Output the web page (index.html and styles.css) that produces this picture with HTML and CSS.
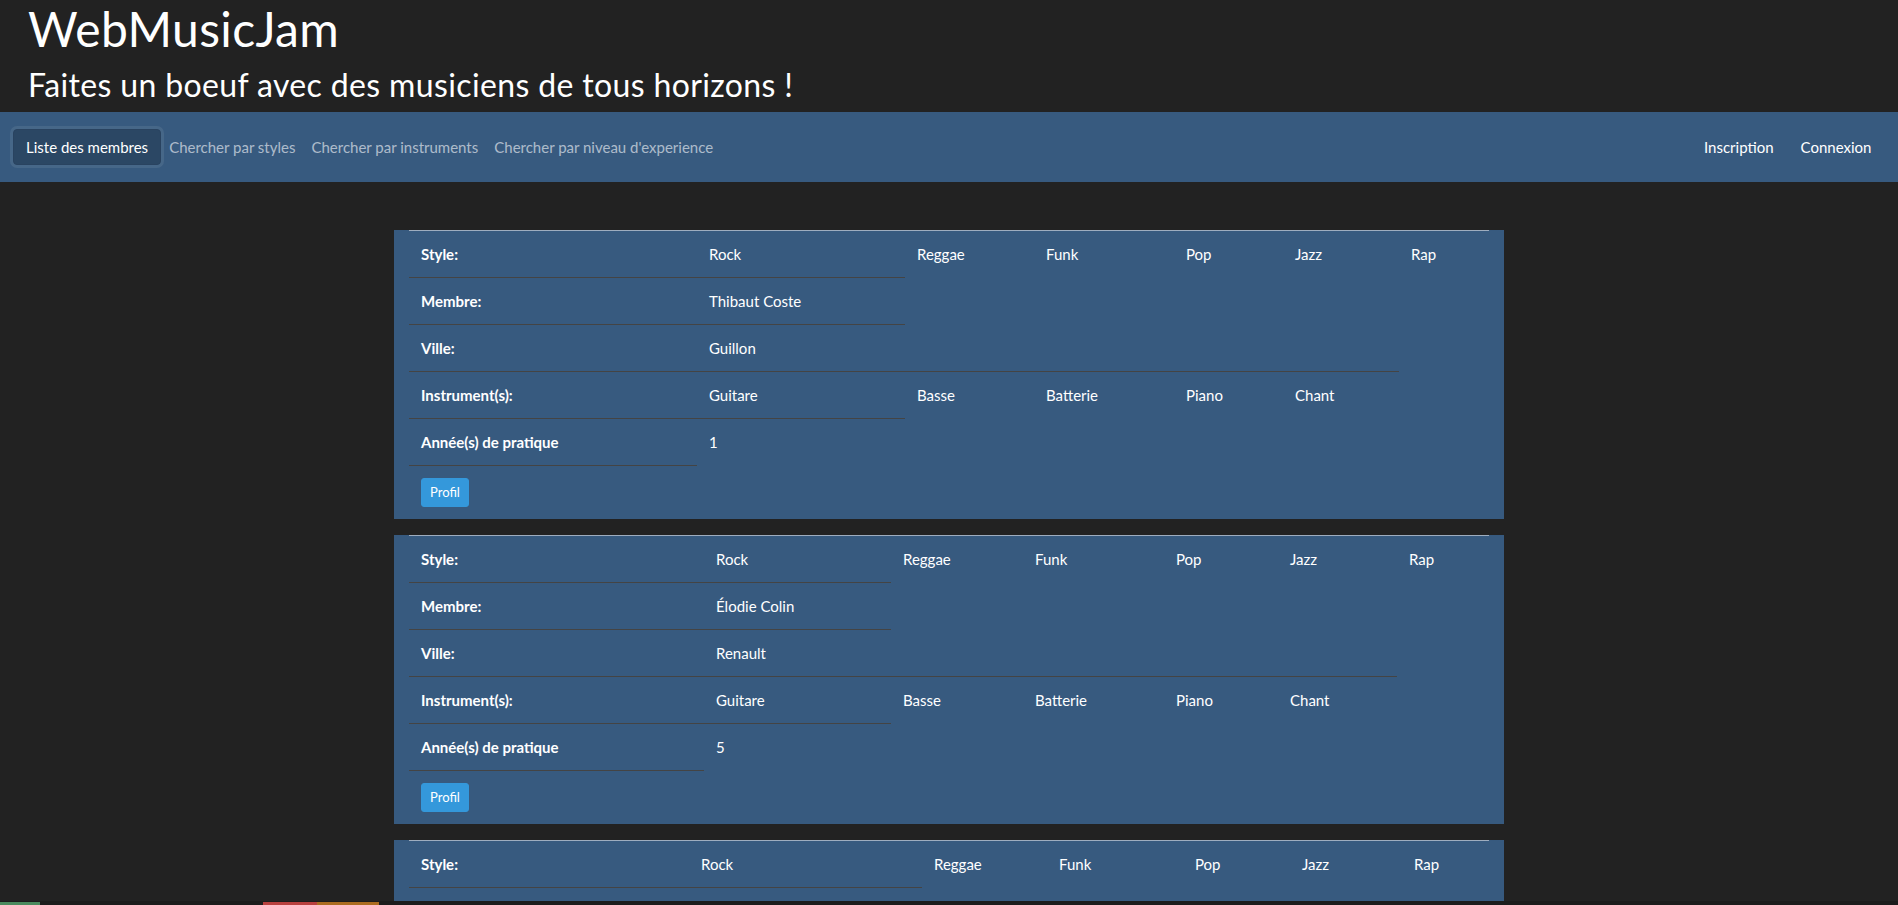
FILE: index.html
```html
<!DOCTYPE html>
<html lang="fr">
<head>
<meta charset="utf-8">
<title>WebMusicJam</title>
<link rel="stylesheet" href="styles.css">
</head>
<body>
<header class="header">
  <h1 class="title">WebMusicJam</h1>
  <h3 class="subtitle">Faites un boeuf avec des musiciens de tous horizons !</h3>
</header>
<nav class="navbar">
  <div class="nav-left">
    <a class="nav-btn" href="#">Liste des membres</a>
    <a class="nav-link" href="#">Chercher par styles</a>
    <a class="nav-link" href="#">Chercher par instruments</a>
    <a class="nav-link" href="#">Chercher par niveau d'experience</a>
  </div>
  <div class="nav-right">
    <a class="nav-link-light" href="#">Inscription</a>
    <a class="nav-link-light" href="#">Connexion</a>
  </div>
</nav>
<main class="container">
  <section class="card">
    <table class="member cols-a">
      <colgroup><col><col><col><col><col><col><col></colgroup>
      <tr><td class="label">Style:</td><td>Rock</td><td>Reggae</td><td>Funk</td><td>Pop</td><td>Jazz</td><td>Rap</td></tr>
      <tr><td class="label">Membre:</td><td>Thibaut Coste</td></tr>
      <tr><td class="label">Ville:</td><td>Guillon</td></tr>
      <tr><td class="label">Instrument(s):</td><td>Guitare</td><td>Basse</td><td>Batterie</td><td>Piano</td><td>Chant</td></tr>
      <tr><td class="label">Année(s) de pratique</td><td>1</td></tr>
      <tr><td class="btn-cell"><a class="btn-profil" href="#">Profil</a></td></tr>
    </table>
  </section>
  <section class="card">
    <table class="member cols-b">
      <colgroup><col><col><col><col><col><col><col></colgroup>
      <tr><td class="label">Style:</td><td>Rock</td><td>Reggae</td><td>Funk</td><td>Pop</td><td>Jazz</td><td>Rap</td></tr>
      <tr><td class="label">Membre:</td><td>Élodie Colin</td></tr>
      <tr><td class="label">Ville:</td><td>Renault</td></tr>
      <tr><td class="label">Instrument(s):</td><td>Guitare</td><td>Basse</td><td>Batterie</td><td>Piano</td><td>Chant</td></tr>
      <tr><td class="label">Année(s) de pratique</td><td>5</td></tr>
      <tr><td class="btn-cell"><a class="btn-profil" href="#">Profil</a></td></tr>
    </table>
  </section>
  <section class="card">
    <table class="member cols-c">
      <colgroup><col><col><col><col><col><col><col></colgroup>
      <tr><td class="label">Style:</td><td>Rock</td><td>Reggae</td><td>Funk</td><td>Pop</td><td>Jazz</td><td>Rap</td></tr>
      <tr><td class="label">Membre:</td><td>Mathilde Lefebvre</td></tr>
      <tr><td class="label">Ville:</td><td>Lemaire</td></tr>
      <tr><td class="label">Instrument(s):</td><td>Guitare</td><td>Basse</td><td>Batterie</td><td>Piano</td><td>Chant</td></tr>
      <tr><td class="label">Année(s) de pratique</td><td>3</td></tr>
      <tr><td class="btn-cell"><a class="btn-profil" href="#">Profil</a></td></tr>
    </table>
  </section>
</main>
<div class="statusbar">
  <span class="seg seg-green"></span>
  <span class="seg seg-red"></span>
  <span class="seg seg-orange"></span>
</div>
</body>
</html>
```
FILE: styles.css
```css
html, body {
  margin: 0;
  padding: 0;
}
body {
  background: #222222;
  color: #ffffff;
  font-family: Lato, "Open Sans", sans-serif;
  font-size: 15px;
  line-height: 22px;
}
a {
  text-decoration: none;
}
.header {
  padding: 0 28px;
}
.title {
  margin: 0 0 8px;
  font-size: 48px;
  line-height: 57.6px;
  font-weight: 400;
  letter-spacing: 0.35px;
}
.subtitle {
  margin: 0 0 8px;
  font-size: 32px;
  line-height: 38.4px;
  font-weight: 400;
  letter-spacing: 0.36px;
}
.navbar {
  background: #375a7f;
  height: 70px;
  display: flex;
  align-items: center;
  justify-content: space-between;
  padding: 0 13px 0 13px;
}
.nav-left,
.nav-right {
  display: flex;
  align-items: center;
}
.nav-btn {
  display: inline-block;
  color: #ffffff;
  background: #2b4764;
  border: 1px solid #294360;
  border-radius: 4px;
  padding: 6px 12px;
  line-height: 22px;
  box-shadow: 0 0 0 3px rgba(85, 115, 146, 0.5);
}
.nav-link {
  color: rgba(255, 255, 255, 0.6);
  padding: 8px;
}
.nav-link-light {
  color: #ffffff;
  padding: 8px 13.5px;
}
.container {
  width: 1110px;
  margin: 48px auto 0;
}
.card {
  background: #375a7f;
  padding: 0 15px;
  margin-bottom: 16px;
}
.member {
  width: 1080px;
  border-collapse: collapse;
  table-layout: fixed;
}
.member td {
  padding: 12px;
  border-top: 1px solid #444444;
  vertical-align: top;
  line-height: 22px;
  white-space: nowrap;
}
.member tr:first-child td {
  border-top-color: #9eadbf;
}
.member td.label {
  font-weight: 700;
}
.member td.btn-cell {
  line-height: 0;
}
.btn-profil {
  display: inline-block;
  vertical-align: top;
  background: #3498db;
  border: 1px solid #3498db;
  border-radius: 3px;
  color: #ffffff;
  font-size: 13px;
  line-height: 19px;
  padding: 4px 8px;
}
.cols-a col:nth-child(1) { width: 288px; }
.cols-a col:nth-child(2) { width: 208px; }
.cols-a col:nth-child(3) { width: 129px; }
.cols-a col:nth-child(4) { width: 140px; }
.cols-a col:nth-child(5) { width: 109px; }
.cols-a col:nth-child(6) { width: 116px; }
.cols-a col:nth-child(7) { width: 90px; }
.cols-b col:nth-child(1) { width: 295px; }
.cols-b col:nth-child(2) { width: 187px; }
.cols-b col:nth-child(3) { width: 132px; }
.cols-b col:nth-child(4) { width: 141px; }
.cols-b col:nth-child(5) { width: 114px; }
.cols-b col:nth-child(6) { width: 119px; }
.cols-b col:nth-child(7) { width: 92px; }
.cols-c col:nth-child(1) { width: 280px; }
.cols-c col:nth-child(2) { width: 233px; }
.cols-c col:nth-child(3) { width: 125px; }
.cols-c col:nth-child(4) { width: 136px; }
.cols-c col:nth-child(5) { width: 107px; }
.cols-c col:nth-child(6) { width: 112px; }
.cols-c col:nth-child(7) { width: 87px; }
.statusbar {
  position: fixed;
  left: 0;
  right: 0;
  bottom: 0;
  height: 4px;
  background: #1c1c1c;
  display: flex;
  align-items: flex-end;
}
.seg {
  display: block;
  height: 3px;
}
.seg-green {
  width: 40px;
  background: #4a8a5e;
}
.seg-red {
  width: 54px;
  margin-left: 223px;
  background: #b8403e;
}
.seg-orange {
  width: 62px;
  background: #ab6c20;
}
```
